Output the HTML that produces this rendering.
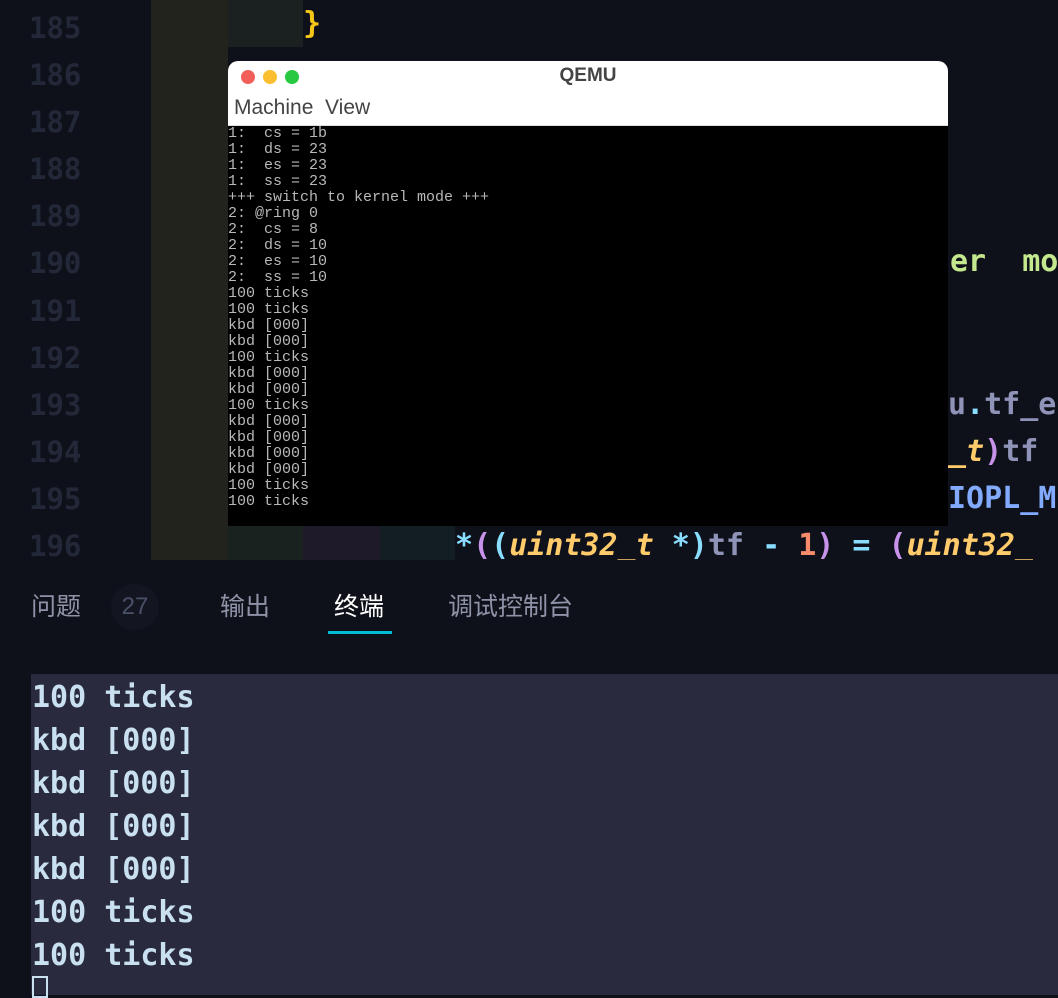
<!DOCTYPE html>
<html><head><meta charset="utf-8"><style>
*{margin:0;padding:0;box-sizing:border-box}
body{width:1058px;height:995px;background:#0f111a;position:relative;overflow:hidden;font-family:"Liberation Mono",monospace}
.ln{position:absolute;left:29px;width:70px;color:#232839;font:bold 29px "DejaVu Sans Mono",monospace}
.abs{position:absolute}
.code{position:absolute;font:bold 30px "DejaVu Sans Mono",monospace;white-space:pre}
.q{position:absolute;left:228px;top:61px;width:720px;height:465px;background:#000;border-radius:10px 10px 0 0;overflow:hidden}
.qt{height:65px;background:#fff;border-bottom:1px solid #ddd;position:relative}
.dot{position:absolute;top:9px;width:14px;height:14px;border-radius:50%}
.qc{position:absolute;top:65px;left:0;color:#b8b8b8;font:15px/16px "Liberation Mono",monospace;white-space:pre}
.tab{position:absolute;top:587px;font:25px "Liberation Sans","Noto Sans CJK SC",sans-serif;color:#8f93a8}
.term{position:absolute;left:31px;top:674px;width:1027px;height:321px;background:#292a3d}
.tl{position:absolute;left:1px;font:bold 30px "DejaVu Sans Mono",monospace;color:#c8e0f0;white-space:pre}
</style></head><body>
<div class="abs" style="left:151px;top:0;width:77px;height:560px;background:#22231d"></div>
<div class="abs" style="left:228px;top:0;width:75px;height:47px;background:#1a2120"></div>
<div class="abs" style="left:228px;top:526px;width:75px;height:34px;background:#1a2220"></div>
<div class="abs" style="left:303px;top:526px;width:77px;height:34px;background:#1e1a2a"></div>
<div class="abs" style="left:380px;top:526px;width:75px;height:34px;background:#131e22"></div>
<div class="code" style="left:303px;top:6px;color:#f5c518">}</div>
<div class="ln" style="top:11px">185</div>
<div class="ln" style="top:58px">186</div>
<div class="ln" style="top:105px">187</div>
<div class="ln" style="top:152px">188</div>
<div class="ln" style="top:199px">189</div>
<div class="ln" style="top:246px">190</div>
<div class="ln" style="top:294px">191</div>
<div class="ln" style="top:341px">192</div>
<div class="ln" style="top:388px">193</div>
<div class="ln" style="top:435px">194</div>
<div class="ln" style="top:482px">195</div>
<div class="ln" style="top:529px">196</div>
<div class="code" style="left:950px;top:244px;color:#c3e88d">er  mo</div>
<div class="code" style="left:948px;top:387px;color:#8f93b8">u<span style="color:#89ddff">.</span>tf_e</div>
<div class="code" style="left:948px;top:434px;color:#8f93b8"><span style="color:#ffcb6b;font-style:italic">_t</span><span style="color:#c792ea">)</span>tf</div>
<div class="code" style="left:948px;top:481px;color:#82aaff">IOPL_M</div>
<div class="code" style="left:455px;top:528px;color:#8f93b8"><span style="color:#89ddff">*</span><span style="color:#c792ea">(</span><span style="color:#89ddff">(</span><i style="color:#ffcb6b">uint32_t</i> <span style="color:#89ddff">*)</span>tf <span style="color:#89ddff">-</span> <span style="color:#f78c6c">1</span><span style="color:#c792ea">)</span> <span style="color:#89ddff">=</span> <span style="color:#c792ea">(</span><i style="color:#ffcb6b">uint32_</i></div>
<div class="abs" style="left:0;top:560px;width:1058px;height:435px;background:#0f111a"></div>
<div class="q">
<div class="qt">
<div class="dot" style="left:13px;background:#f25f58"></div>
<div class="dot" style="left:35px;background:#fbbe2e"></div>
<div class="dot" style="left:57px;background:#28c840"></div>
<div class="abs" style="left:0;width:720px;top:4px;text-align:center;font:bold 19px 'Liberation Sans',sans-serif;color:#444">QEMU</div>
<div class="abs" style="left:6px;top:35px;font:21px 'Liberation Sans',sans-serif;color:#444">Machine&nbsp; View</div>
</div>
<div class="qc">1:  cs = 1b
1:  ds = 23
1:  es = 23
1:  ss = 23
+++ switch to kernel mode +++
2: @ring 0
2:  cs = 8
2:  ds = 10
2:  es = 10
2:  ss = 10
100 ticks
100 ticks
kbd [000]
kbd [000]
100 ticks
kbd [000]
kbd [000]
100 ticks
kbd [000]
kbd [000]
kbd [000]
kbd [000]
100 ticks
100 ticks</div>
</div>
<div class="tab" style="left:31px">问题</div>
<div class="abs" style="left:111px;top:584px;width:48px;height:46px;border-radius:50%;background:#131620;color:#4a5068;font:24px 'Liberation Sans',sans-serif;text-align:center;line-height:46px">27</div>
<div class="tab" style="left:220px">输出</div>
<div class="tab" style="left:334px;color:#fff">终端</div>
<div class="abs" style="left:328px;top:631px;width:64px;height:3px;background:#00bcd4"></div>
<div class="tab" style="left:448px">调试控制台</div>
<div class="term">
<div class="tl" style="top:6px">100 ticks</div>
<div class="tl" style="top:49px">kbd [000]</div>
<div class="tl" style="top:92px">kbd [000]</div>
<div class="tl" style="top:135px">kbd [000]</div>
<div class="tl" style="top:178px">kbd [000]</div>
<div class="tl" style="top:221px">100 ticks</div>
<div class="tl" style="top:264px">100 ticks</div>
<div class="abs" style="left:1px;top:302px;width:16px;height:22px;border:2px solid #c8e0f0"></div>
</div>
</body></html>
